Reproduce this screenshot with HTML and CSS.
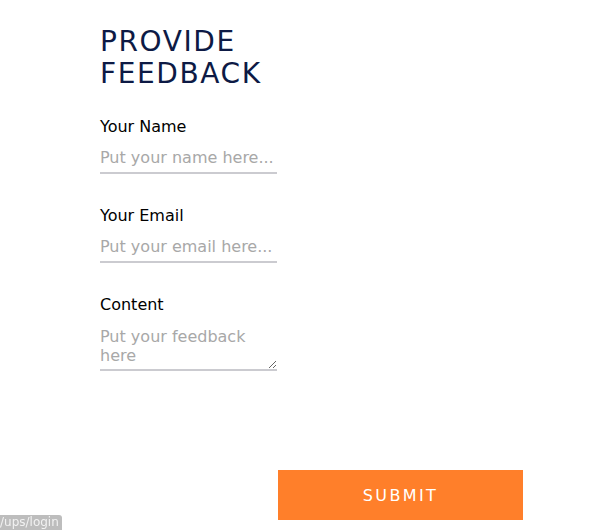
FILE: index.html
```html
<!DOCTYPE html>
<html>
<head>
<meta charset="utf-8">
<link rel="stylesheet" href="styles.css">
</head>
<body>
<form class="feedback">
  <h1 class="title">PROVIDE<br>FEEDBACK</h1>
  <div class="field">
    <label class="label">Your Name</label>
    <input class="input" type="text" placeholder="Put your name here...">
  </div>
  <div class="field">
    <label class="label">Your Email</label>
    <input class="input" type="text" placeholder="Put your email here...">
  </div>
  <div class="field last">
    <label class="label">Content</label>
    <textarea class="input area" placeholder="Put your feedback here"></textarea>
  </div>
  <button class="submit" type="button">SUBMIT</button>
</form>
<div class="status">/ups/login</div>
</body>
</html>
```

FILE: styles.css
```css
html, body {
  margin: 0;
  padding: 0;
  background: #fff;
  font-family: "DejaVu Sans", Verdana, sans-serif;
}
.feedback {
  display: flex;
  flex-direction: column;
  padding: 26px 0 0 100px;
}
.title {
  margin: 0 0 27px;
  font-size: 28px;
  font-weight: normal;
  line-height: 32px;
  letter-spacing: 1.6px;
  color: #0d1a45;
}
.field {
  display: flex;
  flex-direction: column;
  margin-bottom: 32px;
}
.field.last {
  margin-bottom: 0;
}
.label {
  font-size: 16px;
  color: #000;
  line-height: 20px;
  margin-bottom: 6px;
}
.input {
  width: 177px;
  box-sizing: border-box;
  border: none;
  border-bottom: 2px solid #cbcbd0;
  padding: 5px 0;
  font-family: "DejaVu Sans", Verdana, sans-serif;
  font-size: 16px;
  line-height: 19px;
  height: 31px;
  color: #000;
  outline: none;
  background: transparent;
}
.input::placeholder {
  color: #a8a8a8;
}
.area {
  height: 50px;
  resize: vertical;
  overflow: hidden;
  padding: 6px 0 0;
}
.submit {
  margin: 99px 0 0 178px;
  width: 245px;
  height: 50px;
  border: none;
  background: #ff7f2a;
  color: #fff;
  font-family: "DejaVu Sans", Verdana, sans-serif;
  font-size: 16px;
  letter-spacing: 2.4px;
  padding: 0;
}
.status {
  position: fixed;
  left: 0;
  bottom: 0;
  width: 62px;
  height: 15px;
  line-height: 15px;
  background: #bdbdbd;
  color: #f2f2f2;
  font-size: 12px;
  border-top-right-radius: 3px;
  font-family: "DejaVu Sans", sans-serif;
}
```
